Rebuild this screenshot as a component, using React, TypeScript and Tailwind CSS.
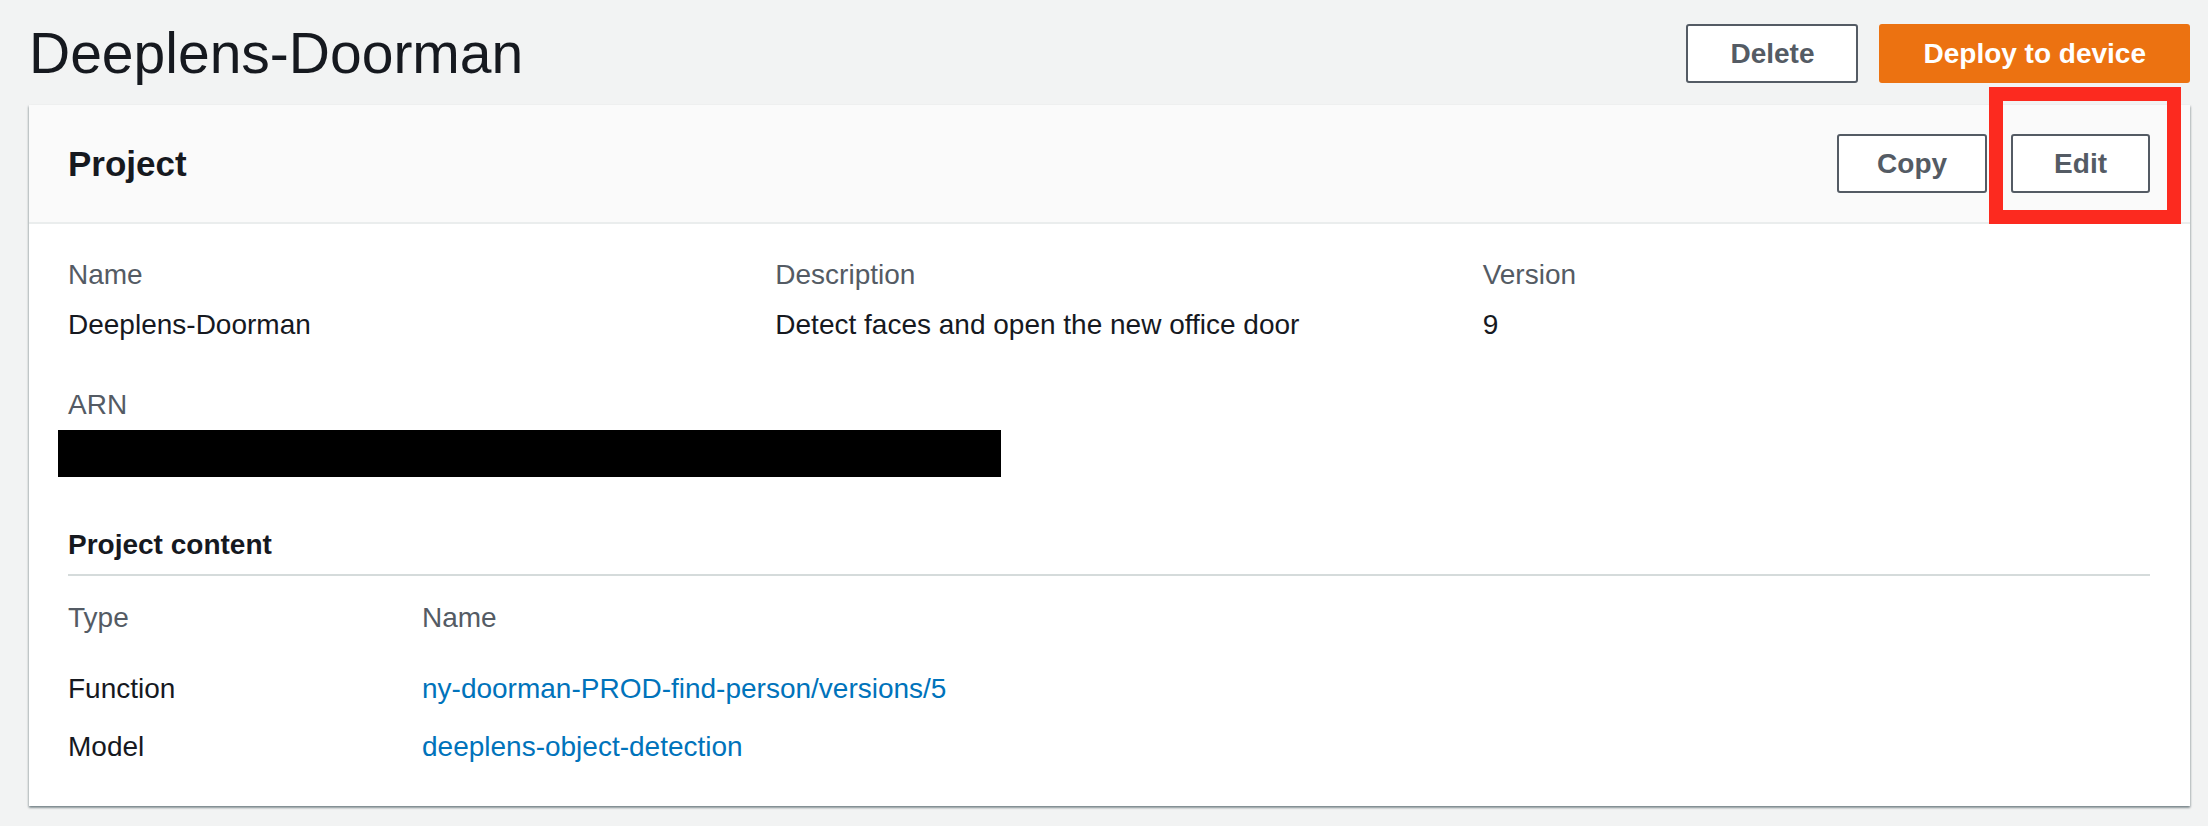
import React from "react";

const btnBase =
  "h-[59px] rounded-[3px] border-2 text-[28px] leading-none font-bold flex items-center";

function OutlineButton({ label, pad = "px-[41px]" }: { label: string; pad?: string }) {
  return (
    <button className={`${btnBase} ${pad} bg-white border-[#545b64] text-[#545b64]`}>
      {label}
    </button>
  );
}

function Field({ label, value }: { label: string; value: string }) {
  return (
    <div>
      <div className="text-[#545b64] leading-[40px]">{label}</div>
      <div className="mt-[10px] text-[#16191f] leading-[40px]">{value}</div>
    </div>
  );
}

const content = [
  { type: "Function", name: "ny-doorman-PROD-find-person/versions/5" },
  { type: "Model", name: "deeplens-object-detection" },
];

export default function App() {
  return (
    <div className="relative min-h-screen bg-[#f2f3f3] font-['Liberation_Sans',Arial,sans-serif] text-[28px]">
      <div className="pl-[29px] pr-[18px] pt-[24px] pb-[20px]">
        {/* page header */}
        <div className="flex items-center justify-between h-[59px]">
          <h1 className="text-[57px] leading-none text-[#16191f]">Deeplens-Doorman</h1>
          <div className="flex gap-[21px]">
            <OutlineButton label="Delete" pad="px-[42px]" />
            <button className={`${btnBase} px-[42px] bg-[#ec7211] border-[#ec7211] text-white`}>
              Deploy to device
            </button>
          </div>
        </div>

        {/* project card */}
        <div className="mt-[22px] bg-white shadow-[0_2px_2px_0_rgba(0,28,36,0.35),1px_1px_2px_0_rgba(0,28,36,0.15),-1px_1px_2px_0_rgba(0,28,36,0.15)]">
          <div className="h-[119px] bg-[#fafafa] border-b-2 border-[#eaeded] flex items-center justify-between pl-[39px] pr-[40px]">
            <h2 className="text-[35px] leading-none font-bold text-[#16191f]">Project</h2>
            <div className="flex gap-[24px]">
              <OutlineButton label="Copy" pad="px-[38px]" />
              <OutlineButton label="Edit" />
            </div>
          </div>

          <div className="pl-[39px] pr-[40px] pt-[31px] pb-[39px]">
            <div className="grid grid-cols-3 gap-x-[40px]">
              <Field label="Name" value="Deeplens-Doorman" />
              <Field label="Description" value="Detect faces and open the new office door" />
              <Field label="Version" value="9" />
            </div>

            <div className="mt-[40px]">
              <div className="text-[#545b64] leading-[40px]">ARN</div>
              <div className="mt-[5px] -ml-[10px] w-[943px] h-[47px] bg-black" />
            </div>

            <div className="mt-[48px] pb-[9px] border-b-2 border-[#d5dbdb] font-bold text-[#16191f] leading-[40px]">
              Project content
            </div>

            <div className="grid grid-cols-[354px_1fr] mt-[22px] text-[#545b64] leading-[40px]">
              <div>Type</div>
              <div>Name</div>
            </div>
            {content.map((row, i) => (
              <div
                key={row.type}
                className={`grid grid-cols-[354px_1fr] leading-[40px] ${i === 0 ? "mt-[31px]" : "mt-[18px]"}`}
              >
                <div className="text-[#16191f]">{row.type}</div>
                <a className="text-[#0073bb]">{row.name}</a>
              </div>
            ))}
          </div>
        </div>
      </div>

      {/* annotation highlight */}
      <div className="absolute left-[1989px] top-[87px] w-[192px] h-[137px] border-[14px] border-[#fc2a1f] pointer-events-none" />
    </div>
  );
}
